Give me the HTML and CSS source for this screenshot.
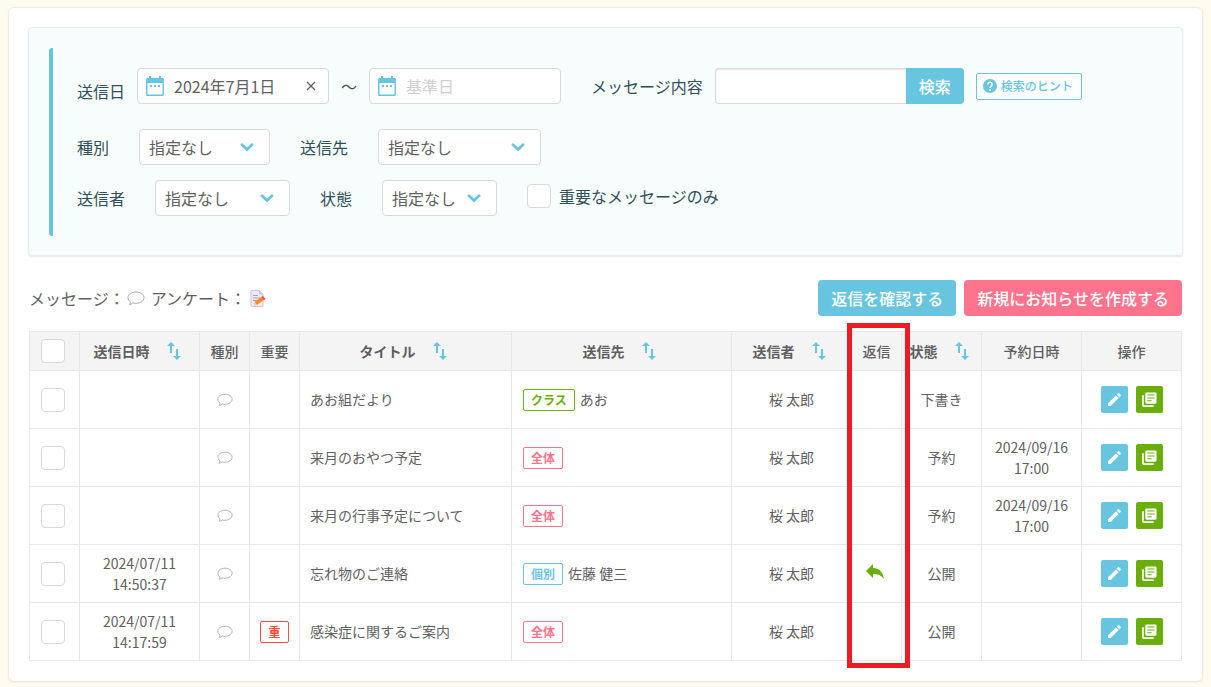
FILE: index.html
```html
<!DOCTYPE html>
<html lang="ja">
<head>
<meta charset="utf-8">
<meta name="viewport" content="width=device-width, initial-scale=1">
<title>お知らせ一覧</title>
<link rel="stylesheet" href="styles.css">
</head>
<body>
<svg class="sprite" aria-hidden="true">
  <symbol id="calendar" viewBox="0 0 18 20"><path fill="currentColor" fill-rule="evenodd" d="M3 0h2v2h8V0h2v2h1.500a1.500 1.500 0 0 1 1.500 1.500v15a1.500 1.500 0 0 1-1.500 1.500h-15A1.500 1.500 0 0 1 0 18.500v-15A1.500 1.500 0 0 1 1.500 2H3zM1.500 7v11.500h15V7zM4 9h2v2H4zM8 9h2v2H8zM12 9h2v2h-2z"/></symbol>
  <symbol id="chevron" viewBox="0 0 14 9"><path d="M2 1.800l5 4.700 5-4.700" fill="none" stroke="currentColor" stroke-width="2.800" stroke-linecap="round"/></symbol>
  <symbol id="sort" viewBox="0 0 14 18"><path fill="currentColor" d="M4 0l4 4H5v7H3V4H0zM9 7h2v7h3l-4 4-4-4h3z"/></symbol>
  <symbol id="bubble" viewBox="0 0 18 15"><path d="M9 1c4.600 0 8 2.400 8 5.600s-3.400 5.700-8 5.700c-1.200 0-2.200-.1-3.200-.4-.9.900-2 1.500-3.400 1.600.7-.8 1-1.700.9-2.700C1.800 9.700 1 8.300 1 6.600 1 3.400 4.400 1 9 1z" fill="#fff" stroke="#aaa"/></symbol>
  <symbol id="pencil" viewBox="0 0 24 24"><path fill="currentColor" d="M3 17.250V21h3.750L17.810 9.940l-3.750-3.750zM20.710 7.040a1 1 0 0 0 0-1.410l-2.340-2.340a1 1 0 0 0-1.410 0l-1.830 1.830 3.750 3.750z"/></symbol>
  <symbol id="copy" viewBox="0 0 24 24"><path fill="currentColor" d="M4 6H1.500v14A2.500 2.500 0 0 0 4 22.500h14V20H4zM20 2H8a2 2 0 0 0-2 2v12a2 2 0 0 0 2 2h12a2 2 0 0 0 2-2V4a2 2 0 0 0-2-2zm-1 8.500H9V9h10zm-4 4H9V13h6zm4-8H9V5h10z"/></symbol>
</svg>
<main class="card">
  <form class="search">
    <div class="search-body">
      <div class="row row-dates">
        <label class="date-label" for="date-from">送信日</label>
        <div class="date-field">
          <svg class="icon-calendar"><use href="#calendar"/></svg>
          <input class="date-input" id="date-from" type="text" value="2024年7月1日">
          <button class="clear" type="button" aria-label="日付を消去"><svg class="icon-clear" viewBox="0 0 10 10"><path d="M1 1l8 8M9 1l-8 8" stroke="currentColor" stroke-width="1.300"/></svg></button>
        </div>
        <span>～</span>
        <div class="date-field">
          <svg class="icon-calendar"><use href="#calendar"/></svg>
          <input class="date-input" type="text" placeholder="基準日" aria-label="送信日の終わり">
        </div>
        <label class="content-label" for="content">メッセージ内容</label>
        <div class="search-group">
          <input class="search-input" id="content" type="text">
          <button class="search-button" type="submit">検索</button>
        </div>
        <button class="hint" type="button"><svg class="icon-help" viewBox="0 0 14 14"><circle cx="7" cy="7" r="7" fill="currentColor"/><path d="M4.800 5.500a2.200 2.200 0 1 1 3.600 1.600C7.500 7.800 7 8 7 9" fill="none" stroke="#fff" stroke-width="1.400"/><circle cx="7" cy="11" r=".9" fill="#fff"/></svg>検索のヒント</button>
      </div>
      <div class="row">
        <label for="kind">種別</label>
        <div class="select select-kind"><select id="kind"><option>指定なし</option></select><svg class="icon-chevron"><use href="#chevron"/></svg></div>
        <label for="to">送信先</label>
        <div class="select select-to"><select id="to"><option>指定なし</option></select><svg class="icon-chevron"><use href="#chevron"/></svg></div>
      </div>
      <div class="row">
        <label for="from">送信者</label>
        <div class="select select-from"><select id="from"><option>指定なし</option></select><svg class="icon-chevron"><use href="#chevron"/></svg></div>
        <label for="state">状態</label>
        <div class="select select-state"><select id="state"><option>指定なし</option></select><svg class="icon-chevron"><use href="#chevron"/></svg></div>
        <label class="check-label"><input class="check" type="checkbox">重要なメッセージのみ</label>
      </div>
    </div>
  </form>

  <div class="toolbar">
    <p class="legend">メッセージ：<svg class="icon-bubble-large"><use href="#bubble"/></svg><span class="legend-item">アンケート：</span><svg class="icon-memo" viewBox="0 0 16 17"><path d="M1.500.5h8l3.500 3.500v12.500h-11a1 1 0 0 1-1-1V1z" fill="#f0eaf8" stroke="#cdc3dc"/><path d="M9.500.5V4H13" fill="#d9cfe8" stroke="#cdc3dc"/><path d="M3 5.500h5M3 8h7M3 10.500h4" stroke="#a79db8"/><path d="M4 15.500l1-4 7-5 2.300 3.200-7 5z" fill="#fb8c2e"/><path d="M4 15.500l1-3.200 2 2.600z" fill="#fbd3a0"/><path d="M11.500 6.900l1.400-1 2.700 3-1.300 1z" fill="#f43e78"/></svg></p>
    <div class="actions">
      <button class="button button-blue" type="button">返信を確認する</button>
      <button class="button button-pink" type="button">新規にお知らせを作成する</button>
    </div>
  </div>

  <div class="table-wrap">
    <table class="messages">
      <colgroup><col class="w50"><col class="w120"><col class="w50"><col class="w50"><col><col class="w220"><col class="w120"><col class="w50"><col class="w80"><col class="w100"><col class="w100"></colgroup>
      <thead>
        <tr>
          <th class="pick"><input class="check" type="checkbox" aria-label="すべて選択"></th>
          <th class="sortable"><span class="sort">送信日時<svg class="icon-sort"><use href="#sort"/></svg></span></th>
          <th>種別</th>
          <th>重要</th>
          <th class="sortable"><span class="sort">タイトル<svg class="icon-sort"><use href="#sort"/></svg></span></th>
          <th class="sortable"><span class="sort">送信先<svg class="icon-sort"><use href="#sort"/></svg></span></th>
          <th class="sortable"><span class="sort">送信者<svg class="icon-sort"><use href="#sort"/></svg></span></th>
          <th>返信</th>
          <th class="sortable"><span class="sort">状態<svg class="icon-sort"><use href="#sort"/></svg></span></th>
          <th>予約日時</th>
          <th>操作</th>
        </tr>
      </thead>
      <tbody>
        <tr>
          <td class="pick"><input class="check" type="checkbox" aria-label="選択"></td><td></td><td><svg class="icon-bubble"><use href="#bubble"/></svg></td><td></td>
          <td class="title">あお組だより</td><td class="target"><span class="tag tag-green">クラス</span>あお</td><td>桜 太郎</td><td></td><td>下書き</td><td></td>
          <td><div class="ops"><button class="op op-edit" type="button" aria-label="編集"><svg class="icon-op"><use href="#pencil"/></svg></button><button class="op op-copy" type="button" aria-label="複製"><svg class="icon-op"><use href="#copy"/></svg></button></div></td>
        </tr>
        <tr>
          <td class="pick"><input class="check" type="checkbox" aria-label="選択"></td><td></td><td><svg class="icon-bubble"><use href="#bubble"/></svg></td><td></td>
          <td class="title">来月のおやつ予定</td><td class="target"><span class="tag tag-pink">全体</span></td><td>桜 太郎</td><td></td><td>予約</td><td>2024/09/16<br>17:00</td>
          <td><div class="ops"><button class="op op-edit" type="button" aria-label="編集"><svg class="icon-op"><use href="#pencil"/></svg></button><button class="op op-copy" type="button" aria-label="複製"><svg class="icon-op"><use href="#copy"/></svg></button></div></td>
        </tr>
        <tr>
          <td class="pick"><input class="check" type="checkbox" aria-label="選択"></td><td></td><td><svg class="icon-bubble"><use href="#bubble"/></svg></td><td></td>
          <td class="title">来月の行事予定について</td><td class="target"><span class="tag tag-pink">全体</span></td><td>桜 太郎</td><td></td><td>予約</td><td>2024/09/16<br>17:00</td>
          <td><div class="ops"><button class="op op-edit" type="button" aria-label="編集"><svg class="icon-op"><use href="#pencil"/></svg></button><button class="op op-copy" type="button" aria-label="複製"><svg class="icon-op"><use href="#copy"/></svg></button></div></td>
        </tr>
        <tr>
          <td class="pick"><input class="check" type="checkbox" aria-label="選択"></td><td>2024/07/11<br>14:50:37</td><td><svg class="icon-bubble"><use href="#bubble"/></svg></td><td></td>
          <td class="title">忘れ物のご連絡</td><td class="target"><span class="tag tag-blue">個別</span>佐藤 健三</td><td>桜 太郎</td>
          <td class="reply"><svg class="icon-reply" viewBox="0 0 18 15"><path d="M7 0v4c6 0 10 4 11 11-3-4-6-5-11-5v4L0 7z" fill="currentColor"/></svg></td><td>公開</td><td></td>
          <td><div class="ops"><button class="op op-edit" type="button" aria-label="編集"><svg class="icon-op"><use href="#pencil"/></svg></button><button class="op op-copy" type="button" aria-label="複製"><svg class="icon-op"><use href="#copy"/></svg></button></div></td>
        </tr>
        <tr>
          <td class="pick"><input class="check" type="checkbox" aria-label="選択"></td><td>2024/07/11<br>14:17:59</td><td><svg class="icon-bubble"><use href="#bubble"/></svg></td><td><span class="tag tag-red">重</span></td>
          <td class="title">感染症に関するご案内</td><td class="target"><span class="tag tag-pink">全体</span></td><td>桜 太郎</td><td></td><td>公開</td><td></td>
          <td><div class="ops"><button class="op op-edit" type="button" aria-label="編集"><svg class="icon-op"><use href="#pencil"/></svg></button><button class="op op-copy" type="button" aria-label="複製"><svg class="icon-op"><use href="#copy"/></svg></button></div></td>
        </tr>
      </tbody>
    </table>
    <div class="highlight"></div>
  </div>
</main>
</body>
</html>
```

FILE: styles.css
```css
* { box-sizing: border-box; }

body {
  margin: 0;
  padding: 7px 8px 4px;
  background: #fffbef;
  color: #5f5f5f;
  font: 16px/24px "Noto Sans CJK JP", "Noto Sans", sans-serif;
}

button, input, select { font: inherit; color: inherit; }
button { cursor: pointer; padding: 0; border: 0; }
svg { display: block; flex: none; }
.sprite { position: absolute; width: 0; height: 0; }

.card {
  padding: 19px 20px 20px;
  background: #fff;
  border: 1px solid #f0ebdf;
  border-radius: 6px;
  box-shadow: 0 1px 2px rgba(0, 0, 0, .06);
}

/* Search panel */
.search {
  margin: 0 -1px;
  padding: 20px 20px 19px;
  background: #f7fdfd;
  border: 1px solid #e8eeee;
  border-radius: 4px;
  box-shadow: 0 1px 2px rgba(0, 0, 0, .1);
  color: #2f4f58;
}
.search-body {
  display: flex;
  flex-direction: column;
  gap: 15px;
  padding: 20px 0 20px 24px;
  border-left: 4px solid #68c5e0;
  border-radius: 3px 0 0 3px;
}
.row { display: flex; align-items: center; gap: 30px; }
.row-dates { gap: 12px; margin-bottom: 10px; }
.row > * { flex: none; }
.date-label { padding-top: 10px; }
.content-label { margin-left: 18px; }

.date-field {
  display: flex;
  align-items: center;
  width: 192px;
  height: 36px;
  padding: 0 12px 0 8px;
  background: #fff;
  border: 1px solid #d9d9d9;
  border-radius: 4px;
  color: #5f5f5f;
}
.icon-calendar { width: 18px; height: 20px; color: #68c5e0; }
.date-input {
  flex: 1;
  min-width: 0;
  padding: 0 0 0 10px;
  border: 0;
  outline: 0;
  background: none;
}
.date-input::placeholder { color: #cfcfcf; }
.clear { background: none; }
.icon-clear { width: 10px; height: 10px; }

.search-group { display: flex; height: 36px; }
.search-input {
  width: 191px;
  padding: 0 10px;
  background: #fff;
  border: 1px solid #d9d9d9;
  border-right: 0;
  border-radius: 4px 0 0 4px;
  box-shadow: inset 0 1px 2px rgba(0, 0, 0, .1);
}
.search-button {
  width: 58px;
  background: #68c5e0;
  border-radius: 0 4px 4px 0;
  color: #fff;
  font-weight: 500;
}
.hint {
  display: flex;
  align-items: center;
  gap: 4px;
  width: 106px;
  height: 27px;
  padding: 0 6px;
  background: #fff;
  border: 1px solid #68c5e0;
  border-radius: 2px;
  color: #68c5e0;
  font-size: 12px;
  font-weight: 500;
}
.icon-help { width: 14px; height: 14px; }

.select { display: grid; align-items: center; height: 36px; }
.select > * { grid-area: 1 / 1; }
.select select {
  appearance: none;
  width: 100%;
  height: 36px;
  padding: 0 9px;
  background: #fff;
  border: 1px solid #d9d9d9;
  border-radius: 4px;
  color: #5f5f5f;
}
.select-kind { width: 131px; }
.select-to { width: 163px; }
.select-from { width: 135px; }
.select-state { width: 115px; }
.icon-chevron {
  justify-self: end;
  width: 14px;
  height: 9px;
  margin-right: 16px;
  color: #68c5e0;
  pointer-events: none;
}
.check {
  appearance: none;
  display: block;
  width: 24px;
  height: 24px;
  margin: 0 auto;
  background: #fff;
  border: 1px solid #d9d9d9;
  border-radius: 4px;
}
.check:checked { background: #68c5e0; }
.check-label { display: flex; align-items: center; gap: 8px; margin-bottom: 4px; }

/* Legend and actions */
.toolbar {
  display: flex;
  align-items: center;
  justify-content: space-between;
  margin: 24px 0 15px;
}
.legend { display: flex; align-items: center; margin: 0; }
.legend-item { margin: 0 4px 0 6px; }
.icon-bubble-large { width: 18px; height: 15px; margin-left: 2px; }
.icon-memo { width: 16px; height: 17px; }
.actions { display: flex; gap: 8px; }
.button {
  height: 36px;
  padding: 0 13px;
  border-radius: 4px;
  color: #fff;
  font-weight: 500;
}
.button-blue { background: #68c5e0; }
.button-pink { background: #ff738c; }

/* Message list */
.table-wrap { position: relative; }
.messages {
  width: 100%;
  table-layout: fixed;
  border-collapse: collapse;
  font-size: 14px;
  line-height: 21px;
  text-align: center;
}
.w50 { width: 50px; }
.w80 { width: 80px; }
.w100 { width: 100px; }
.w120 { width: 120px; }
.w220 { width: 220px; }
.messages th, .messages td { padding: 0; border: 1px solid #e8e8e8; }
.messages th { height: 39px; background: #f4f4f4; font-weight: 500; }
.messages th.sortable { font-weight: 700; }
.messages td { height: 58px; }
.messages .pick { padding-right: 4px; }
.messages .title { padding-left: 10px; text-align: left; }
.messages .target { padding-left: 11px; text-align: left; }
.messages .reply { padding: 0 4px 4px 0; }
.sort { display: flex; align-items: center; justify-content: center; gap: 17px; padding-right: 5px; }
.icon-sort { width: 14px; height: 18px; color: #68c5e0; }
.icon-bubble { width: 16px; height: 14px; margin: 0 auto; }
.icon-reply { width: 18px; height: 15px; margin: 0 auto; color: #6aae0a; }

.tag {
  display: inline-block;
  margin-right: 5px;
  padding: 0 7px;
  border: 1px solid;
  border-radius: 2px;
  font-size: 12px;
  font-weight: 700;
  line-height: 20px;
}
.tag-green { color: #6aae0a; }
.tag-pink { color: #ff738c; }
.tag-blue { color: #68c5e0; }
.tag-red { margin-right: 0; color: #ff4b33; }

.ops { display: flex; justify-content: center; gap: 8px; }
.op {
  display: flex;
  align-items: center;
  justify-content: center;
  width: 27px;
  height: 27px;
  border-radius: 2px;
  color: #fff;
}
.op-edit { background: #68c5e0; }
.op-copy { background: #6aae0a; }
.icon-op { width: 17px; height: 17px; }

.highlight {
  position: absolute;
  top: -8px;
  right: 272px;
  bottom: -7px;
  width: 63px;
  border: 5px solid #ed1c24;
  pointer-events: none;
}
```
